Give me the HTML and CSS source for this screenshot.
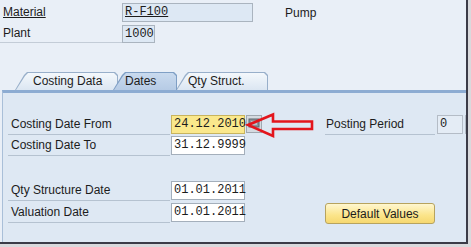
FILE: index.html
```html
<!DOCTYPE html>
<html>
<head>
    <meta charset="utf-8" />
    <title>Costing Dates</title>
    <link rel="stylesheet" href="styles.css">
</head>
<body>
    <div id="window">
        <div id="header">
            <div class="hrow">
                <span class="hlabel required">Material</span>
                <span class="hinput material"><u>R-F100</u></span>
                <span class="desc">Pump</span>
            </div>
            <div class="hrow">
                <span class="hlabel lined">Plant</span>
                <span class="hinput plant">1000</span>
            </div>
        </div>

        <div id="tabs">
            <div class="tab first"><div class="tab-face">Costing Data</div></div>
            <div class="tab active"><div class="tab-face">Dates</div></div>
            <div class="tab last"><div class="tab-face">Qty Struct.</div></div>
        </div>

        <div id="panel">
            <div class="frow top">
                <span class="flabel">Costing Date From</span>
                <span class="field focus">24.12.2010</span>
                <span class="f4"><svg width="12" height="10" viewBox="0 0 12 10"><rect x="1" y="1" width="10" height="8" fill="#8c949c" stroke="#5d656d"/><path d="M3 4h6M3 6h6" stroke="#e6eaee"/></svg></span>
                <span class="flabel period">Posting Period</span>
                <span class="field small">0</span>
                <span class="field small cut"></span>
                <svg class="arrow" width="72" height="28" viewBox="0 0 72 28">
                    <path d="M3,13 L28,2.5 L28,9.5 L67,9.5 L67,17 L28,17 L28,24 Z" fill="none" stroke="#e3151c" stroke-width="2.6" stroke-linejoin="miter"/>
                </svg>
            </div>
            <div class="frow second">
                <span class="flabel">Costing Date To</span>
                <span class="field">31.12.9999</span>
            </div>
            <div class="frow third">
                <span class="flabel">Qty Structure Date</span>
                <span class="field">01.01.2011</span>
            </div>
            <div class="frow fourth">
                <span class="flabel">Valuation Date</span>
                <span class="field">01.01.2011</span>
                <button class="defaults">Default Values</button>
            </div>
        </div>
    </div>
</body>
</html>
```

FILE: styles.css
```css
body{
    margin: 0;
    background-color: #d9d9dc;
    font-family: 'Liberation Sans', Arial, sans-serif;
    font-size: 12px;
    color: #1c1c1c;
}
#window{
    width: 466px;
    height: 242px;
    background-color: #e9eff7;
    border-right: 2px solid #3b3b47;
    border-bottom: 2px solid #3b3b47;
    overflow: hidden;
}
#header{
    padding-top: 3px;
}
.hrow{
    display: flex;
    align-items: center;
    margin-bottom: 3px;
}
.hlabel{
    width: 122px;
    box-sizing: border-box;
    padding-left: 3px;
    line-height: 17px;
}
.required{
    text-decoration: underline;
}
.lined{
    border-bottom: 1px solid #c3ccd7;
}
.hinput{
    box-sizing: border-box;
    height: 19px;
    border: 1px solid #aab4bf;
    background-color: #dde8f4;
    padding-left: 2px;
    font-family: 'Liberation Mono', monospace;
    font-size: 12px;
    line-height: 17px;
}
.material{
    width: 131px;
}
.plant{
    width: 33px;
    height: 18px;
    line-height: 16px;
}
.desc{
    margin-left: 32px;
}
#tabs{
    display: flex;
    height: 18px;
    margin-top: 29px;
    padding-left: 15px;
}
.tab{
    position: relative;
    height: 18px;
    box-sizing: border-box;
    padding: 1px 1px 0 1px;
    background-color: #98afca;
    clip-path: polygon(0 100%, 9px 3px, 12px 0, calc(100% - 3px) 0, 100% 3px, 100% 100%);
}
.tab-face{
    height: 17px;
    line-height: 17px;
    background: linear-gradient(#f4f8fc, #dbe6f2);
    clip-path: polygon(0 100%, 9px 3px, 12px 0, calc(100% - 3px) 0, 100% 3px, 100% 100%);
    white-space: nowrap;
}
.first{
    width: 103px;
}
.first .tab-face{
    padding-left: 17px;
}
.active{
    width: 64px;
    margin-left: -5px;
    z-index: 2;
    background-color: #7f9fc5;
}
.active .tab-face{
    padding-left: 11px;
    background: linear-gradient(#c9daee, #b6cbe5);
}
.last{
    width: 92px;
    margin-left: -1px;
    z-index: 1;
}
.last .tab-face{
    padding-left: 11px;
}
#panel{
    margin-left: 2px;
    height: 160px;
    border-top: 3px solid #8dacd2;
    border-left: 1px solid #a9bfd8;
    background-color: #dee8f3;
    padding: 22px 0 0 5px;
}
.frow{
    display: flex;
    height: 20px;
}
.top{
    position: relative;
}
.second{
    margin-top: 1px;
}
.third{
    margin-top: 25px;
}
.fourth{
    margin-top: 2px;
}
.flabel{
    width: 162px;
    box-sizing: border-box;
    height: 20px;
    padding-left: 3px;
    line-height: 19px;
    border-bottom: 1px solid #b5c2d0;
    flex-shrink: 0;
}
.field{
    box-sizing: border-box;
    width: 74px;
    height: 19px;
    margin-left: 1px;
    padding-left: 2px;
    border: 1px solid #a4afbb;
    background-color: #ffffff;
    font-family: 'Liberation Mono', monospace;
    font-size: 12px;
    line-height: 17px;
    flex-shrink: 0;
}
.focus{
    background-color: #fae88c;
    border-color: #c8b45e;
}
.f4{
    box-sizing: border-box;
    width: 16px;
    height: 18px;
    margin-left: 1px;
    border: 1px solid #a0a8b0;
    background-color: #d4dae0;
    display: flex;
    justify-content: center;
    padding-top: 2px;
    flex-shrink: 0;
}
.period{
    width: 110px;
    margin-left: 63px;
    padding-left: 1px;
}
.small{
    width: 26px;
    margin-left: 2px;
    background-color: #e4ecf5;
    border-color: #b4bcc6;
}
.cut{
    width: 20px;
}
.arrow{
    position: absolute;
    left: 237px;
    top: -3px;
}
.defaults{
    box-sizing: border-box;
    width: 110px;
    height: 21px;
    margin-left: 80px;
    border: 1px solid #b7a35e;
    border-radius: 3px;
    background: linear-gradient(#fff7cf, #fbe489 60%, #f6d870);
    font-family: 'Liberation Sans', Arial, sans-serif;
    font-size: 12px;
    color: #1c1c1c;
    padding: 0;
    flex-shrink: 0;
}
```
